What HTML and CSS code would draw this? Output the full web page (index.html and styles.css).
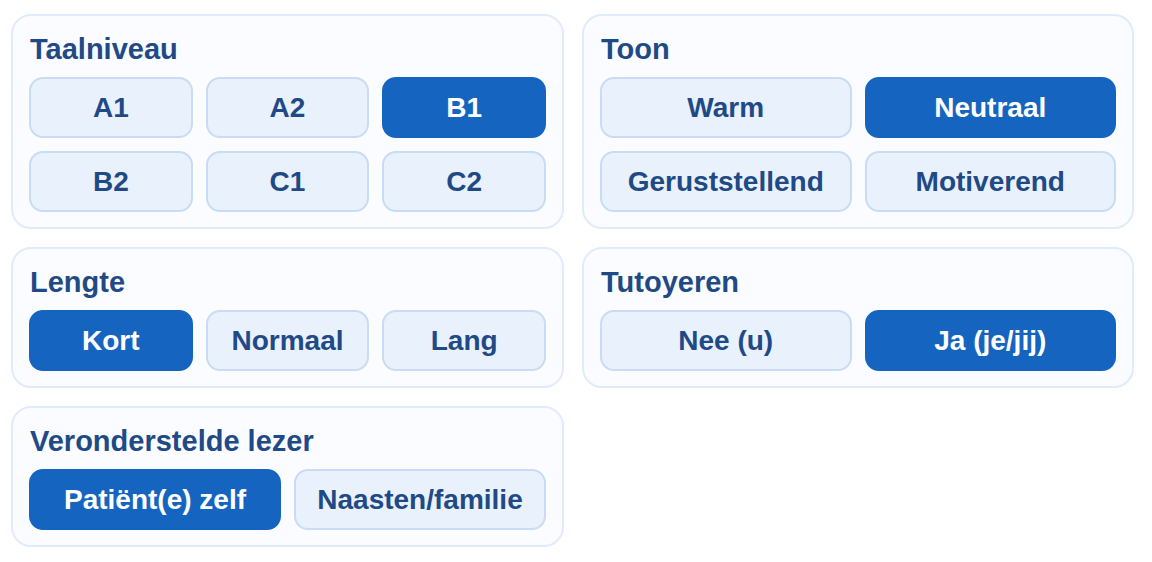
FILE: index.html
```html
<!DOCTYPE html>
<html lang="nl">
<head>
<meta charset="utf-8">
<title>Instellingen</title>
<link rel="stylesheet" href="styles.css">
</head>
<body>
<div class="settings">
  <section class="card">
    <h2 class="card-title">Taalniveau</h2>
    <div class="options cols-3">
      <button class="opt">A1</button>
      <button class="opt">A2</button>
      <button class="opt selected">B1</button>
      <button class="opt">B2</button>
      <button class="opt">C1</button>
      <button class="opt">C2</button>
    </div>
  </section>
  <section class="card">
    <h2 class="card-title">Toon</h2>
    <div class="options cols-2">
      <button class="opt">Warm</button>
      <button class="opt selected">Neutraal</button>
      <button class="opt">Geruststellend</button>
      <button class="opt">Motiverend</button>
    </div>
  </section>
  <section class="card">
    <h2 class="card-title">Lengte</h2>
    <div class="options cols-3">
      <button class="opt selected">Kort</button>
      <button class="opt">Normaal</button>
      <button class="opt">Lang</button>
    </div>
  </section>
  <section class="card">
    <h2 class="card-title">Tutoyeren</h2>
    <div class="options cols-2">
      <button class="opt">Nee (u)</button>
      <button class="opt selected">Ja (je/jij)</button>
    </div>
  </section>
  <section class="card">
    <h2 class="card-title">Veronderstelde lezer</h2>
    <div class="options cols-2">
      <button class="opt selected">Patiënt(e) zelf</button>
      <button class="opt">Naasten/familie</button>
    </div>
  </section>
</div>
</body>
</html>
```

FILE: styles.css
```css
* {
  box-sizing: border-box;
}

html, body {
  margin: 0;
  background: #ffffff;
}

body {
  font-family: "Liberation Sans", Arial, Helvetica, sans-serif;
  padding: 14px 18px 0 11px;
}

.settings {
  display: grid;
  grid-template-columns: 553px 552px;
  column-gap: 18px;
  row-gap: 18px;
  align-items: start;
}

.card {
  background: #fafcff;
  border: 2px solid #e0ebfb;
  border-radius: 20px;
  padding: 17px 16px 15px 16px;
}

.card-title {
  margin: 0 0 11px 1px;
  font-size: 29px;
  line-height: 33px;
  font-weight: 700;
  color: #1f4a86;
}

.options {
  display: grid;
  gap: 13px;
}

.cols-3 {
  grid-template-columns: repeat(3, 1fr);
}

.cols-2 {
  grid-template-columns: repeat(2, 1fr);
}

.opt {
  height: 61px;
  margin: 0;
  padding: 0 8px;
  border: 2px solid #c8dcf6;
  border-radius: 14px;
  background: #e9f1fd;
  color: #1f4a86;
  font-family: "Liberation Sans", Arial, Helvetica, sans-serif;
  font-size: 28px;
  font-weight: 700;
  text-align: center;
  white-space: nowrap;
}

.opt.selected {
  background: #1565c0;
  border-color: #1565c0;
  color: #ffffff;
}
```
